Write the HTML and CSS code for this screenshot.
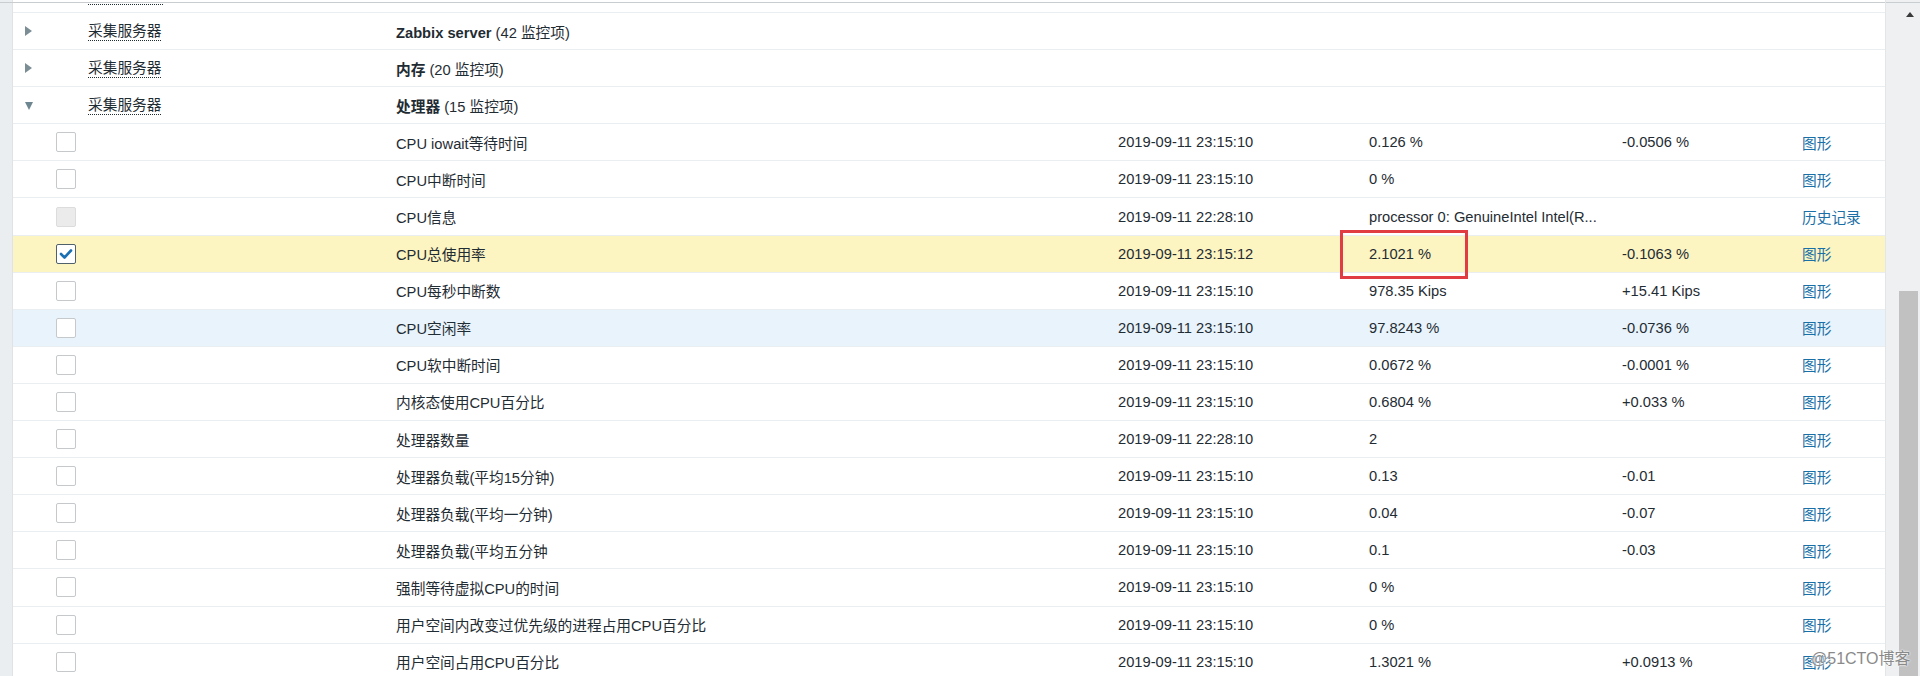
FILE: index.html
```html
<!DOCTYPE html>
<html lang="zh-CN">
<head>
<meta charset="utf-8">
<title>Latest data</title>
<link rel="stylesheet" href="styles.css">
</head>
<body>
<div class="page">
  <div class="side"></div>
  <div class="main">
    <div class="prev"><span class="prev-line"></span><span class="prev-host"></span></div>

    <div class="row group">
      <div class="c1"><span class="tri-right"></span></div><div class="c2"></div>
      <div class="c3"><span class="host">采集服务器</span></div>
      <div class="c4 span"><b>Zabbix server</b> (42 监控项)</div>
    </div>
    <div class="row group">
      <div class="c1"><span class="tri-right"></span></div><div class="c2"></div>
      <div class="c3"><span class="host">采集服务器</span></div>
      <div class="c4 span"><b>内存</b> (20 监控项)</div>
    </div>
    <div class="row group">
      <div class="c1"><span class="tri-down"></span></div><div class="c2"></div>
      <div class="c3"><span class="host">采集服务器</span></div>
      <div class="c4 span"><b>处理器</b> (15 监控项)</div>
    </div>

    <div class="row">
      <div class="c1"></div><div class="c2"><span class="cb"></span></div><div class="c3"></div>
      <div class="c4">CPU iowait等待时间</div><div class="c5">2019-09-11 23:15:10</div>
      <div class="c6">0.126 %</div><div class="c7">-0.0506 %</div><div class="c8"><a>图形</a></div>
    </div>
    <div class="row">
      <div class="c1"></div><div class="c2"><span class="cb"></span></div><div class="c3"></div>
      <div class="c4">CPU中断时间</div><div class="c5">2019-09-11 23:15:10</div>
      <div class="c6">0 %</div><div class="c7"></div><div class="c8"><a>图形</a></div>
    </div>
    <div class="row">
      <div class="c1"></div><div class="c2"><span class="cb disabled"></span></div><div class="c3"></div>
      <div class="c4">CPU信息</div><div class="c5">2019-09-11 22:28:10</div>
      <div class="c6 clip">processor 0: GenuineIntel Intel(R...</div><div class="c7"></div><div class="c8"><a>历史记录</a></div>
    </div>
    <div class="row selected">
      <div class="c1"></div><div class="c2"><span class="cb checked"><svg width="14" height="12" viewBox="0 0 14 12"><polyline points="2,6 5.5,9.5 12,2.5" fill="none" stroke="#1b6fb3" stroke-width="2.6" stroke-linecap="round" stroke-linejoin="round"/></svg></span></div><div class="c3"></div>
      <div class="c4">CPU总使用率</div><div class="c5">2019-09-11 23:15:12</div>
      <div class="c6">2.1021 %</div><div class="c7">-0.1063 %</div><div class="c8"><a>图形</a></div>
    </div>
    <div class="row">
      <div class="c1"></div><div class="c2"><span class="cb"></span></div><div class="c3"></div>
      <div class="c4">CPU每秒中断数</div><div class="c5">2019-09-11 23:15:10</div>
      <div class="c6">978.35 Kips</div><div class="c7">+15.41 Kips</div><div class="c8"><a>图形</a></div>
    </div>
    <div class="row hover">
      <div class="c1"></div><div class="c2"><span class="cb"></span></div><div class="c3"></div>
      <div class="c4">CPU空闲率</div><div class="c5">2019-09-11 23:15:10</div>
      <div class="c6">97.8243 %</div><div class="c7">-0.0736 %</div><div class="c8"><a>图形</a></div>
    </div>
    <div class="row">
      <div class="c1"></div><div class="c2"><span class="cb"></span></div><div class="c3"></div>
      <div class="c4">CPU软中断时间</div><div class="c5">2019-09-11 23:15:10</div>
      <div class="c6">0.0672 %</div><div class="c7">-0.0001 %</div><div class="c8"><a>图形</a></div>
    </div>
    <div class="row">
      <div class="c1"></div><div class="c2"><span class="cb"></span></div><div class="c3"></div>
      <div class="c4">内核态使用CPU百分比</div><div class="c5">2019-09-11 23:15:10</div>
      <div class="c6">0.6804 %</div><div class="c7">+0.033 %</div><div class="c8"><a>图形</a></div>
    </div>
    <div class="row">
      <div class="c1"></div><div class="c2"><span class="cb"></span></div><div class="c3"></div>
      <div class="c4">处理器数量</div><div class="c5">2019-09-11 22:28:10</div>
      <div class="c6">2</div><div class="c7"></div><div class="c8"><a>图形</a></div>
    </div>
    <div class="row">
      <div class="c1"></div><div class="c2"><span class="cb"></span></div><div class="c3"></div>
      <div class="c4">处理器负载(平均15分钟)</div><div class="c5">2019-09-11 23:15:10</div>
      <div class="c6">0.13</div><div class="c7">-0.01</div><div class="c8"><a>图形</a></div>
    </div>
    <div class="row">
      <div class="c1"></div><div class="c2"><span class="cb"></span></div><div class="c3"></div>
      <div class="c4">处理器负载(平均一分钟)</div><div class="c5">2019-09-11 23:15:10</div>
      <div class="c6">0.04</div><div class="c7">-0.07</div><div class="c8"><a>图形</a></div>
    </div>
    <div class="row">
      <div class="c1"></div><div class="c2"><span class="cb"></span></div><div class="c3"></div>
      <div class="c4">处理器负载(平均五分钟</div><div class="c5">2019-09-11 23:15:10</div>
      <div class="c6">0.1</div><div class="c7">-0.03</div><div class="c8"><a>图形</a></div>
    </div>
    <div class="row">
      <div class="c1"></div><div class="c2"><span class="cb"></span></div><div class="c3"></div>
      <div class="c4">强制等待虚拟CPU的时间</div><div class="c5">2019-09-11 23:15:10</div>
      <div class="c6">0 %</div><div class="c7"></div><div class="c8"><a>图形</a></div>
    </div>
    <div class="row">
      <div class="c1"></div><div class="c2"><span class="cb"></span></div><div class="c3"></div>
      <div class="c4">用户空间内改变过优先级的进程占用CPU百分比</div><div class="c5">2019-09-11 23:15:10</div>
      <div class="c6">0 %</div><div class="c7"></div><div class="c8"><a>图形</a></div>
    </div>
    <div class="row">
      <div class="c1"></div><div class="c2"><span class="cb"></span></div><div class="c3"></div>
      <div class="c4">用户空间占用CPU百分比</div><div class="c5">2019-09-11 23:15:10</div>
      <div class="c6">1.3021 %</div><div class="c7">+0.0913 %</div><div class="c8"><a>图形</a></div>
    </div>

    <div class="redbox"></div>
  </div>
  <div class="scroll">
    <span class="scroll-up"></span>
    <div class="thumb"></div>
  </div>
  <div class="watermark">@51CTO博客</div>
</div>
</body>
</html>
```
FILE: styles.css
```css
html, body {
  margin: 0;
  padding: 0;
  background: #ffffff;
}
body {
  width: 1920px;
  height: 676px;
  overflow: hidden;
  font-family: "Liberation Sans", Arial, "Noto Sans CJK SC", sans-serif;
  font-size: 14.7px;
  color: #1f2c33;
}
.page {
  position: relative;
  display: flex;
  width: 1920px;
  height: 676px;
}
.side {
  width: 12px;
  flex: none;
  background: #ebeef0;
  border-right: 1px solid #dfe3e6;
}
.main {
  position: relative;
  flex: 1;
  min-width: 0;
  background: #ffffff;
}
.prev {
  position: relative;
  height: 13px;
  box-sizing: border-box;
  border-bottom: 1px solid #ebeef0;
}
.prev-line {
  position: absolute;
  left: -13px;
  right: 0;
  top: 2px;
  height: 1px;
  background: #c9cdd0;
}
.prev-host {
  position: absolute;
  left: 75px;
  top: 4px;
  width: 75px;
  border-bottom: 1px dotted #1f2c33;
}
.row {
  display: grid;
  grid-template-columns: 35px 36px 308px 722px 251px 253px 180px 1fr;
  height: 37.1px;
  box-sizing: border-box;
  border-bottom: 1px solid #ebeef0;
  align-items: center;
  white-space: nowrap;
}
.row > div {
  padding-left: 4px;
  min-width: 0;
  overflow: hidden;
}
.row .c1 {
  padding-left: 12px;
  display: flex;
  align-items: center;
  height: 100%;
}
.row .c2 {
  padding-left: 8px;
  display: flex;
  align-items: center;
  height: 100%;
}
.row .span {
  grid-column: 4 / 9;
}
.row b {
  font-weight: bold;
}
.clip {
  text-overflow: clip;
}
.row.selected {
  background: #fcf4c1;
}
.row.hover {
  background: #e8f3fc;
}
.host {
  display: inline-block;
  line-height: 18px;
  border-bottom: 1px dotted #1f2c33;
}
.tri-right {
  display: block;
  width: 0;
  height: 0;
  border-top: 5px solid transparent;
  border-bottom: 5px solid transparent;
  border-left: 7px solid #7c8d96;
}
.tri-down {
  display: block;
  width: 0;
  height: 0;
  margin-top: 1px;
  border-left: 4.5px solid transparent;
  border-right: 4.5px solid transparent;
  border-top: 8px solid #6e8690;
}
.cb {
  display: flex;
  align-items: center;
  justify-content: center;
  width: 18px;
  height: 18px;
  border: 1px solid #c5c9cc;
  border-radius: 2px;
  background: #ffffff;
}
.cb.disabled {
  background: #ebebeb;
  border-color: #dcdcdc;
}
.cb.checked {
  border-color: #4f626c;
}
a {
  color: #1a6fa6;
  text-decoration: none;
}
.redbox {
  position: absolute;
  left: 1327px;
  top: 230px;
  width: 128px;
  height: 49px;
  box-sizing: border-box;
  border: 3px solid #e03c41;
}
.scroll {
  position: relative;
  width: 35px;
  flex: none;
  background: #eef0f2;
  border-left: 1px solid #e3e6e8;
  box-sizing: border-box;
}
.scroll::before {
  content: "";
  position: absolute;
  left: 0;
  right: 0;
  top: 2px;
  height: 1px;
  background: #c9cdd0;
}
.scroll-up {
  position: absolute;
  left: 20px;
  top: 12px;
  width: 0;
  height: 0;
  border-left: 4px solid transparent;
  border-right: 4px solid transparent;
  border-bottom: 5px solid #3a3a3a;
}
.thumb {
  position: absolute;
  left: 13px;
  top: 291px;
  width: 19px;
  bottom: 0;
  background: #c1c1c1;
}
.watermark {
  position: absolute;
  left: 1811px;
  top: 650px;
  font-family: "Liberation Sans", Arial, "Noto Sans CJK SC", sans-serif;
  font-size: 16px;
  line-height: 18px;
  color: #8a8a8a;
  text-shadow: 0 0 2px #ffffff, 0 0 2px #ffffff;
  white-space: nowrap;
}
```
